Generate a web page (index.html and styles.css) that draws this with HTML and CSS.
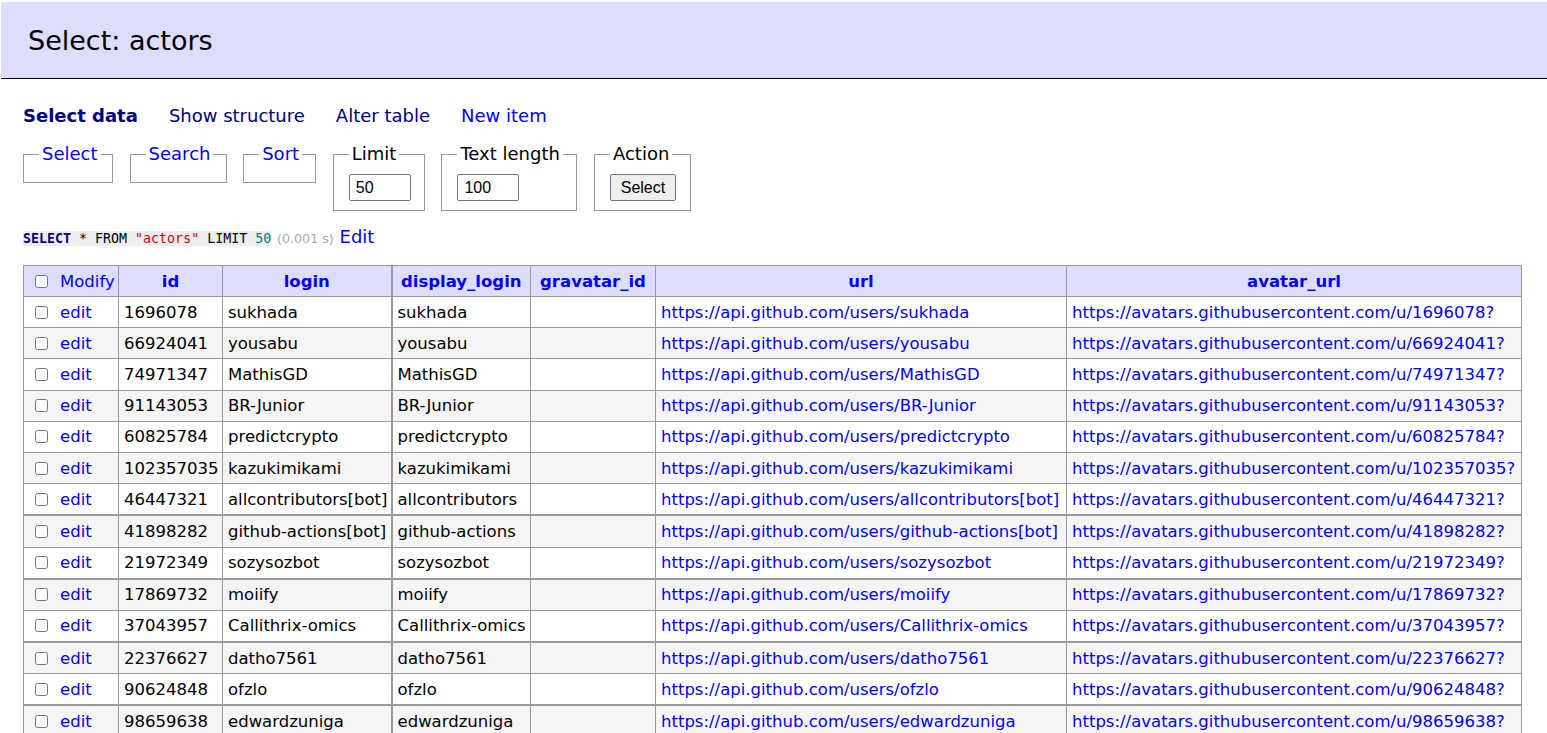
FILE: index.html
```html
<!DOCTYPE html>
<html>
<head>
<meta charset="utf-8">
<title>Select: actors</title>
<link rel="stylesheet" href="styles.css">
</head>
<body>
<h2 class="title">Select: actors</h2>
<div class="content">
  <p class="tabs">
    <b class="tab-current">Select data</b>
    <a class="tab-link visited">Show structure</a>
    <a class="tab-link visited">Alter table</a>
    <a class="tab-link">New item</a>
  </p>
  <div class="filters">
    <fieldset class="fs fs-empty fs-select"><legend><a class="lnk">Select</a></legend></fieldset>
    <fieldset class="fs fs-empty fs-search"><legend><a class="lnk">Search</a></legend></fieldset>
    <fieldset class="fs fs-empty fs-sort"><legend><a class="lnk">Sort</a></legend></fieldset>
    <fieldset class="fs fs-limit"><legend>Limit</legend><input class="num" type="text" value="50"></fieldset>
    <fieldset class="fs fs-text"><legend>Text length</legend><input class="num" type="text" value="100"></fieldset>
    <fieldset class="fs fs-action"><legend>Action</legend><button class="btn" type="button">Select</button></fieldset>
  </div>
  <p class="sql"><code class="sqlcode"><span class="kw">SELECT</span> * FROM <span class="str">"actors"</span> LIMIT <span class="numv">50</span></code> <span class="time">(0.001 s)</span> <a class="lnk">Edit</a></p>
  <table class="data">
    <colgroup>
      <col class="c-check"><col class="c-id"><col class="c-login"><col class="c-dlogin"><col class="c-grav"><col class="c-url"><col class="c-avatar">
    </colgroup>
    <thead>
      <tr>
        <td class="th-modify"><input type="checkbox" class="cb"><a class="lnk">Modify</a></td>
        <th><a class="lnk">id</a></th>
        <th><a class="lnk">login</a></th>
        <th class="thick-left"><a class="lnk">display_login</a></th>
        <th><a class="lnk">gravatar_id</a></th>
        <th><a class="lnk">url</a></th>
        <th><a class="lnk">avatar_url</a></th>
      </tr>
    </thead>
    <tbody>
      <tr><td class="chk"><input type="checkbox" class="cb"><a class="lnk">edit</a></td><td>1696078</td><td>sukhada</td><td class="thick-left">sukhada</td><td></td><td><a class="lnk">https://api.github.com/users/sukhada</a></td><td><a class="lnk">https://avatars.githubusercontent.com/u/1696078?</a></td></tr>
      <tr class="odd"><td class="chk"><input type="checkbox" class="cb"><a class="lnk">edit</a></td><td>66924041</td><td>yousabu</td><td class="thick-left">yousabu</td><td></td><td><a class="lnk">https://api.github.com/users/yousabu</a></td><td><a class="lnk">https://avatars.githubusercontent.com/u/66924041?</a></td></tr>
      <tr><td class="chk"><input type="checkbox" class="cb"><a class="lnk">edit</a></td><td>74971347</td><td>MathisGD</td><td class="thick-left">MathisGD</td><td></td><td><a class="lnk">https://api.github.com/users/MathisGD</a></td><td><a class="lnk">https://avatars.githubusercontent.com/u/74971347?</a></td></tr>
      <tr class="odd"><td class="chk"><input type="checkbox" class="cb"><a class="lnk">edit</a></td><td>91143053</td><td>BR-Junior</td><td class="thick-left">BR-Junior</td><td></td><td><a class="lnk">https://api.github.com/users/BR-Junior</a></td><td><a class="lnk">https://avatars.githubusercontent.com/u/91143053?</a></td></tr>
      <tr><td class="chk"><input type="checkbox" class="cb"><a class="lnk">edit</a></td><td>60825784</td><td>predictcrypto</td><td class="thick-left">predictcrypto</td><td></td><td><a class="lnk">https://api.github.com/users/predictcrypto</a></td><td><a class="lnk">https://avatars.githubusercontent.com/u/60825784?</a></td></tr>
      <tr class="odd"><td class="chk"><input type="checkbox" class="cb"><a class="lnk">edit</a></td><td>102357035</td><td>kazukimikami</td><td class="thick-left">kazukimikami</td><td></td><td><a class="lnk">https://api.github.com/users/kazukimikami</a></td><td><a class="lnk">https://avatars.githubusercontent.com/u/102357035?</a></td></tr>
      <tr><td class="chk"><input type="checkbox" class="cb"><a class="lnk">edit</a></td><td>46447321</td><td>allcontributors[bot]</td><td class="thick-left">allcontributors</td><td></td><td><a class="lnk">https://api.github.com/users/allcontributors[bot]</a></td><td><a class="lnk">https://avatars.githubusercontent.com/u/46447321?</a></td></tr>
      <tr class="odd thick-top"><td class="chk"><input type="checkbox" class="cb"><a class="lnk">edit</a></td><td>41898282</td><td>github-actions[bot]</td><td class="thick-left">github-actions</td><td></td><td><a class="lnk">https://api.github.com/users/github-actions[bot]</a></td><td><a class="lnk">https://avatars.githubusercontent.com/u/41898282?</a></td></tr>
      <tr><td class="chk"><input type="checkbox" class="cb"><a class="lnk">edit</a></td><td>21972349</td><td>sozysozbot</td><td class="thick-left">sozysozbot</td><td></td><td><a class="lnk">https://api.github.com/users/sozysozbot</a></td><td><a class="lnk">https://avatars.githubusercontent.com/u/21972349?</a></td></tr>
      <tr class="odd thick-top"><td class="chk"><input type="checkbox" class="cb"><a class="lnk">edit</a></td><td>17869732</td><td>moiify</td><td class="thick-left">moiify</td><td></td><td><a class="lnk">https://api.github.com/users/moiify</a></td><td><a class="lnk">https://avatars.githubusercontent.com/u/17869732?</a></td></tr>
      <tr><td class="chk"><input type="checkbox" class="cb"><a class="lnk">edit</a></td><td>37043957</td><td>Callithrix-omics</td><td class="thick-left">Callithrix-omics</td><td></td><td><a class="lnk">https://api.github.com/users/Callithrix-omics</a></td><td><a class="lnk">https://avatars.githubusercontent.com/u/37043957?</a></td></tr>
      <tr class="odd thick-top"><td class="chk"><input type="checkbox" class="cb"><a class="lnk">edit</a></td><td>22376627</td><td>datho7561</td><td class="thick-left">datho7561</td><td></td><td><a class="lnk">https://api.github.com/users/datho7561</a></td><td><a class="lnk">https://avatars.githubusercontent.com/u/22376627?</a></td></tr>
      <tr><td class="chk"><input type="checkbox" class="cb"><a class="lnk">edit</a></td><td>90624848</td><td>ofzlo</td><td class="thick-left">ofzlo</td><td></td><td><a class="lnk">https://api.github.com/users/ofzlo</a></td><td><a class="lnk">https://avatars.githubusercontent.com/u/90624848?</a></td></tr>
      <tr class="odd thick-top"><td class="chk"><input type="checkbox" class="cb"><a class="lnk">edit</a></td><td>98659638</td><td>edwardzuniga</td><td class="thick-left">edwardzuniga</td><td></td><td><a class="lnk">https://api.github.com/users/edwardzuniga</a></td><td><a class="lnk">https://avatars.githubusercontent.com/u/98659638?</a></td></tr>
    </tbody>
  </table>
</div>
</body>
</html>
```

FILE: styles.css
```css
html, body {
  margin: 0;
  padding: 0;
  background: #fff;
}
body {
  font-family: "DejaVu Sans", Verdana, sans-serif;
  font-size: 18px;
  color: #000;
}
.title {
  margin: 2px 0 0 1px;
  padding: 0 0 0 27px;
  height: 76px;
  line-height: 78px;
  font-size: 27px;
  font-weight: normal;
  background: #ddf;
  border-bottom: 1px solid #000;
}
.content {
  padding: 0 0 0 23px;
}
.tabs {
  margin: 0;
  padding-top: 26px;
  height: 22px;
  line-height: 22px;
  display: flex;
  gap: 31px;
}
.tab-current {
  color: #000080;
  font-weight: bold;
}
.tab-link {
  color: #00f;
}
.tab-link.visited {
  color: #000080;
}
.lnk {
  color: #00f;
  text-decoration: none;
  cursor: pointer;
}
.filters {
  display: flex;
  align-items: flex-start;
  gap: 16.6px;
  margin-top: 16px;
}
.fs {
  margin: 0;
  border: 1px solid #999;
  padding: 9px 13px 9px 15px;
  min-width: 0;
}
.fs legend {
  padding: 0 3px;
  line-height: 22px;
}
.fs-empty {
  padding-bottom: 8px;
}
.fs-select { width: 60px; }
.fs-search { width: 67px; }
.fs-sort { width: 43px; }
.fs-limit { width: 62px; }
.fs-text { width: 106px; }
.fs-action { width: 67px; }
.num {
  display: block;
  box-sizing: border-box;
  width: 62px;
  height: 27px;
  margin: 0;
  padding: 1px 6px;
  border: 1px solid #767676;
  border-radius: 2px;
  font-family: "Liberation Sans", Arial, sans-serif;
  font-size: 16px;
}
.btn {
  display: block;
  box-sizing: border-box;
  width: 66px;
  height: 27px;
  margin: 0;
  padding: 0 6px;
  border: 1px solid #767676;
  border-radius: 2px;
  background: #efefef;
  font-family: "Liberation Sans", Arial, sans-serif;
  font-size: 16px;
  color: #000;
}
.sql {
  margin: 14px 0 0;
  height: 24px;
  line-height: 24px;
}
.sqlcode {
  font-family: "DejaVu Sans Mono", monospace;
  font-size: 13.3px;
  background: #eee;
  color: #000;
}
.kw {
  font-weight: bold;
  color: #000080;
}
.str { color: #d00; }
.numv { color: #008080; }
.time {
  font-size: 12.7px;
  color: #aaa;
}
.data {
  margin-top: 16px;
  border-collapse: collapse;
  table-layout: fixed;
  width: 1499px;
  border: 1px solid #999;
  font-size: 16.5px;
}
.c-check { width: 95px; }
.c-id { width: 104px; }
.c-login { width: 169px; }
.c-dlogin { width: 139px; }
.c-grav { width: 125px; }
.c-url { width: 411px; }
.c-avatar { width: 455px; }
.data th, .data td {
  border: 1px solid #999;
  padding: 0 5px;
  height: 30.2px;
  white-space: nowrap;
  overflow: hidden;
  text-align: left;
  vertical-align: middle;
}
.data thead td, .data thead th {
  background: #ddf;
  height: 30px;
}
.data th {
  text-align: center;
  font-weight: bold;
}
.data td.chk, .data td.th-modify {
  padding-left: 10px;
}
.cb {
  width: 13px;
  height: 13px;
  margin: 0 12px 0 1px;
  vertical-align: -1px;
}
.data tr.odd td {
  background: #f5f5f5;
}
.data .thick-left {
  border-left-width: 2px;
}
.data tr.thick-top td {
  border-top-width: 2px;
}
```
